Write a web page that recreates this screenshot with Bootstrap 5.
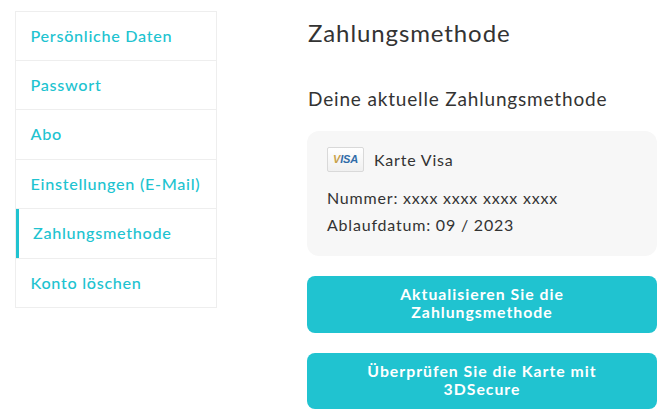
<!DOCTYPE html>
<html lang="de">
<head>
    <meta charset="UTF-8">
    <meta name="viewport" content="width=device-width, initial-scale=1.0">
    <title>Zahlungsmethode</title>
    <link href="https://cdn.jsdelivr.net/npm/bootstrap@5.3.3/dist/css/bootstrap.min.css" rel="stylesheet">
    <style>
        body {
            font-family: "Lato", "Noto Sans", sans-serif;
            color: #333;
            background: #fff;
            letter-spacing: .6px;
        }
        .page-wrap {
            display: flex;
            padding: 11px 12px 0 15px;
        }
        /* Seitenmenü */
        .side-menu {
            width: 202px;
            flex: none;
            margin-right: 90px;
            align-self: flex-start;
            border-radius: 0;
        }
        .side-menu .list-group-item {
            height: 49.5px;
            padding: 0 0 0 14.5px;
            display: flex;
            align-items: center;
            border-color: #eee;
            color: #20c3d0;
            font-size: 16.2px;
            font-weight: 500;
            letter-spacing: .7px;
            white-space: nowrap;
        }
        .side-menu .list-group-item.current {
            padding-left: 17px;
            box-shadow: inset 3px 0 0 #20c3d0;
            background: #fff;
        }
        /* Inhalt */
        .content-col {
            width: 350px;
            flex: none;
        }
        .page-title {
            font-size: 24px;
            font-weight: 400;
            letter-spacing: .9px;
            line-height: 28px;
            margin: 8px 0 0 1px;
        }
        .sub-title {
            font-size: 19px;
            font-weight: 400;
            letter-spacing: .83px;
            line-height: 24px;
            margin: 40px 0 0 1px;
        }
        .pay-box {
            height: 125px;
            margin-top: 20px;
            padding: 16px 20px;
            background: #f7f7f7;
            border-radius: 12px;
            font-size: 16px;
            letter-spacing: .8px;
        }
        .visa-badge {
            width: 37px;
            height: 25px;
            background: linear-gradient(#fff, #f0f0f0);
            border: 1px solid #d9d9d9;
            border-radius: 2px;
        }
        .visa-text {
            font-family: "Liberation Sans", sans-serif;
            font-size: 11px;
            font-weight: 700;
            font-style: italic;
            letter-spacing: -.2px;
            color: #2f6ca8;
        }
        .visa-v {
            color: #c9a24a;
        }
        .pay-title {
            gap: 10px;
            margin-bottom: 12px;
        }
        .pay-line {
            line-height: 27px;
        }
        .pay-btn {
            display: block;
            width: 100%;
            height: 56.5px;
            margin-top: 20px;
            padding: 0 40px 2px;
            background: #20c3d0;
            border: 0;
            border-radius: 8px;
            color: #fff;
            font-size: 15.8px;
            font-weight: 700;
            line-height: 18px;
            letter-spacing: 1px;
        }
        .pay-btn:hover {
            background: #1bb2be;
            color: #fff;
        }
    </style>
</head>
<body>
    <div class="page-wrap">
        <div class="list-group side-menu">
            <a href="#" class="list-group-item">Persönliche Daten</a>
            <a href="#" class="list-group-item">Passwort</a>
            <a href="#" class="list-group-item">Abo</a>
            <a href="#" class="list-group-item">Einstellungen (E-Mail)</a>
            <a href="#" class="list-group-item current">Zahlungsmethode</a>
            <a href="#" class="list-group-item">Konto löschen</a>
        </div>
        <div class="content-col">
            <h1 class="page-title">Zahlungsmethode</h1>
            <h2 class="sub-title">Deine aktuelle Zahlungsmethode</h2>
            <div class="pay-box">
                <div class="d-flex align-items-center pay-title">
                    <span class="visa-badge d-flex align-items-center justify-content-center"><span class="visa-text"><span class="visa-v">V</span>ISA</span></span>
                    <span>Karte Visa</span>
                </div>
                <div class="pay-line">Nummer: xxxx xxxx xxxx xxxx</div>
                <div class="pay-line">Ablaufdatum: 09 / 2023</div>
            </div>
            <button type="button" class="btn pay-btn">Aktualisieren Sie die Zahlungsmethode</button>
            <button type="button" class="btn pay-btn">Überprüfen Sie die Karte mit 3DSecure</button>
        </div>
    </div>
    <script src="https://cdn.jsdelivr.net/npm/bootstrap@5.3.3/dist/js/bootstrap.bundle.min.js"></script>
</body>
</html>
